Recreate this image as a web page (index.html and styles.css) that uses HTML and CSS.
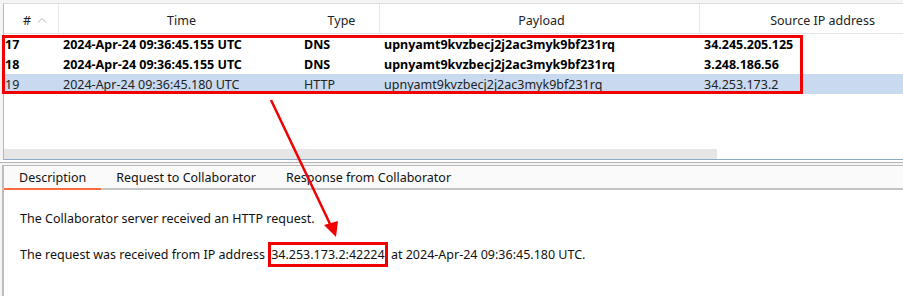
FILE: index.html
```html
<!DOCTYPE html>
<html lang="en">
<head>
    <meta charset="UTF-8">
    <title>Collaborator interactions</title>
    <link rel="stylesheet" href="styles.css">
</head>
<body>
    <div class="app">

        <!-- Interactions table -->
        <div class="table-panel">
            <div class="row head">
                <div class="cell c-num">#
                    <svg class="sort" width="10" height="6" viewBox="0 0 10 6"><polyline points="1,5.5 5,1.5 9,5.5" fill="none" stroke="#b5b5b5" stroke-width="1"/></svg>
                </div>
                <div class="cell c-time">Time</div>
                <div class="cell c-type">Type</div>
                <div class="cell c-payload">Payload</div>
                <div class="cell c-ip">Source IP address</div>
            </div>
            <div class="rows">
                <div class="row bold">
                    <div class="cell c-num">17</div>
                    <div class="cell c-time">2024-Apr-24 09:36:45.155 UTC</div>
                    <div class="cell c-type">DNS</div>
                    <div class="cell c-payload">upnyamt9kvzbecj2j2ac3myk9bf231rq</div>
                    <div class="cell c-ip">34.245.205.125</div>
                </div>
                <div class="row bold">
                    <div class="cell c-num">18</div>
                    <div class="cell c-time">2024-Apr-24 09:36:45.155 UTC</div>
                    <div class="cell c-type">DNS</div>
                    <div class="cell c-payload">upnyamt9kvzbecj2j2ac3myk9bf231rq</div>
                    <div class="cell c-ip">3.248.186.56</div>
                </div>
                <div class="row selected">
                    <div class="cell c-num">19</div>
                    <div class="cell c-time">2024-Apr-24 09:36:45.180 UTC</div>
                    <div class="cell c-type">HTTP</div>
                    <div class="cell c-payload">upnyamt9kvzbecj2j2ac3myk9bf231rq</div>
                    <div class="cell c-ip">34.253.173.2</div>
                </div>
                <div class="mark-rows"></div>
            </div>
            <div class="filler"></div>
            <div class="hscroll"><div class="thumb"></div></div>
        </div>

        <div class="split"></div>

        <!-- Detail tabs -->
        <div class="tabs">
            <div class="tab active">Description</div>
            <div class="tab">Request to Collaborator</div>
            <div class="tab">Response from Collaborator</div>
        </div>

        <div class="content">
            <p>The Collaborator server received an HTTP request.</p>
            <p>The request was received from IP address <span class="mark-ip">34.253.173.2:42224</span> at 2024-Apr-24 09:36:45.180 UTC.</p>
        </div>

        <!-- annotation arrow -->
        <svg class="arrow" width="903" height="296" viewBox="0 0 903 296">
            <line x1="271" y1="100" x2="331" y2="226" stroke="#f00000" stroke-width="2.5"/>
            <polygon points="336,237 324,225 338,221" fill="#f00000"/>
        </svg>
    </div>
</body>
</html>
```

FILE: styles.css
```css
body {
    margin: 0;
    background-color: #f4f4f4;
    font-family: 'Noto Sans', 'Open Sans', sans-serif;
    font-size: 12.5px;
    color: #111;
}

.app {
    position: relative;
    width: 903px;
    height: 296px;
    overflow: hidden;
}

.table-panel {
    margin: 3px 0 0 3px;
    background-color: #fff;
    border-left: 1px solid #a6bad3;
    border-top: 1px solid #dcdcdc;
    border-bottom: 1px solid #8eaacb;
}

.row {
    display: flex;
    height: 20px;
    align-items: center;
    white-space: nowrap;
}

.row.head {
    height: 29px;
    border-bottom: 1px solid #e3e3e3;
    color: #222;
}

.row.head .cell {
    justify-content: center;
    height: 100%;
    padding-top: 3px;
    border-right: 1px solid #e8e8e8;
}

.row.head .c-time {
    border-right: none;
}

.cell {
    display: flex;
    align-items: center;
    flex-shrink: 0;
    padding-left: 1px;
    box-sizing: border-box;
}

.c-num { width: 55px; }
.c-time { width: 241px; padding-left: 4px; }
.c-type { width: 80px; padding-left: 4px; }
.c-payload { width: 320px; padding-left: 4px; }
.c-ip { width: 242px; padding-left: 4px; }

.row.head .c-num { padding-left: 8px; }

.sort {
    margin-left: 6px;
}

.rows {
    position: relative;
}

.row.bold {
    font-weight: 700;
    color: #000;
}

.row.selected {
    background-color: #c9daf0;
    color: #222;
}

.mark-rows {
    position: absolute;
    left: -2px;
    top: 1px;
    width: 795px;
    height: 53px;
    border: 3px solid #f00000;
}

.filler {
    height: 55px;
}

.hscroll {
    height: 10px;
}

.hscroll .thumb {
    width: 713px;
    height: 100%;
    background-color: #e6e6e6;
}

.split {
    height: 2px;
    border-bottom: 1px solid #b4b4b4;
    background-color: #fff;
}

.tabs {
    display: flex;
    margin: 2px 0 0 2px;
    height: 22px;
    background-color: #fafafa;
    border-top: 1px solid #b9b9b9;
    border-left: 2px solid #bdbdbd;
    border-bottom: 2px solid #c4c4c4;
}

.tab {
    padding: 0 15px;
    line-height: 23px;
    color: #111;
}

.tab.active {
    border-bottom: 2px solid #fa6a3a;
    height: 22px;
    margin-bottom: -2px;
}

.content {
    background-color: #fff;
    margin-left: 2px;
    border-left: 2px solid #bdbdbd;
    height: 110px;
    padding: 20px 0 0 16px;
    color: #111;
}

.content p {
    margin: 0 0 18px 0;
    line-height: 18px;
}

.mark-ip {
    border: 3px solid #f00000;
    padding: 1px 0;
}

.arrow {
    position: absolute;
    left: 0;
    top: 0;
    pointer-events: none;
}
```
